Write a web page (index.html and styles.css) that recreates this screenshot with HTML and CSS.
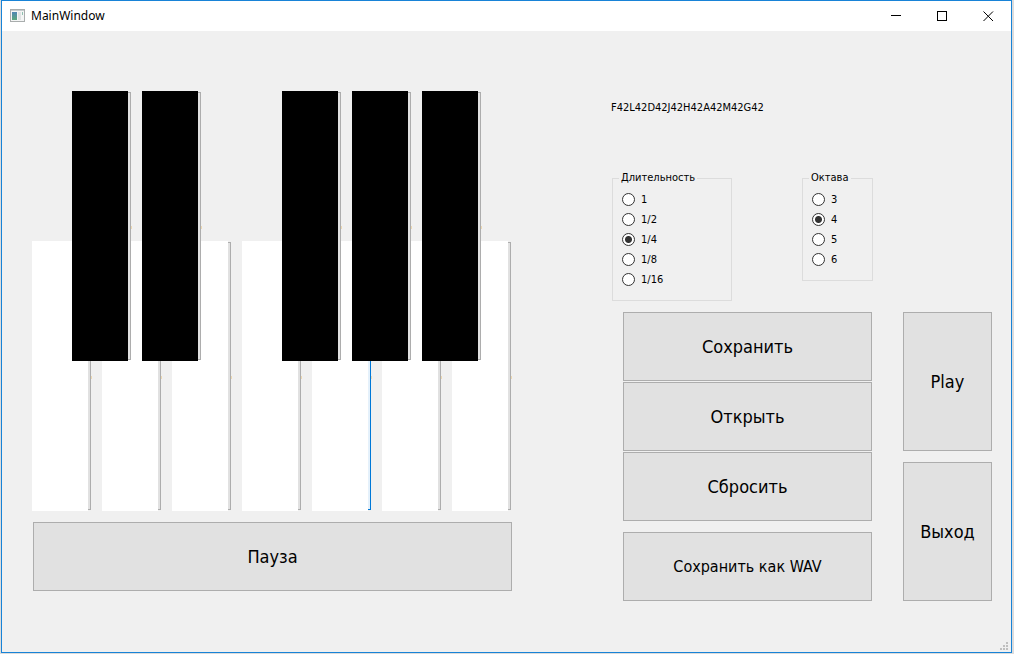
FILE: index.html
```html
<!DOCTYPE html>
<html lang="ru">
<head>
<meta charset="utf-8">
<title>MainWindow</title>
<meta name="viewport" content="width=device-width, initial-scale=1">
<link rel="stylesheet" href="styles.css">
</head>
<body>
<div class="window">
  <header class="titlebar">
    <svg class="app-icon" width="15" height="13" viewBox="0 0 15 13" aria-hidden="true">
      <defs><linearGradient id="pane" x1="0" y1="0" x2="0" y2="1"><stop offset="0" stop-color="#4f86b4"/><stop offset="1" stop-color="#5aa77c"/></linearGradient></defs>
      <rect x=".5" y=".5" width="14" height="12" fill="#f4f5f5" stroke="#a9adad"/>
      <rect x="1" y="1" width="13" height="1" fill="#c5cccd"/>
      <rect x="2" y="3" width="5" height="8" fill="url(#pane)"/>
      <rect x="8" y="3" width="3" height="8" fill="#dfe3e3"/>
      <rect x="12" y="3" width="1" height="3" fill="#8fc0b0"/>
    </svg>
    <h1 class="title">MainWindow</h1>
    <button class="caption" type="button" aria-label="Minimize"><svg width="11" height="11" viewBox="0 0 11 11"><path d="M0 4.5H10"/></svg></button>
    <button class="caption" type="button" aria-label="Maximize"><svg width="11" height="11" viewBox="0 0 11 11"><path d="M.5 .5H9.5V9.5H.5Z"/></svg></button>
    <button class="caption" type="button" aria-label="Close"><svg width="11" height="11" viewBox="0 0 11 11"><path class="smooth" d="M.5 .5L10 10M10 .5L.5 10"/></svg></button>
  </header>
  <main class="content">
    <section class="instrument">
      <div class="piano">
        <div class="keys white">
          <button class="key" type="button" aria-label="C"></button>
          <button class="key" type="button" aria-label="D"></button>
          <button class="key" type="button" aria-label="E"></button>
          <button class="key" type="button" aria-label="F"></button>
          <button class="key current" type="button" aria-label="G"></button>
          <button class="key" type="button" aria-label="A"></button>
          <button class="key" type="button" aria-label="B"></button>
        </div>
        <div class="keys black">
          <button class="key" type="button" aria-label="C sharp"></button>
          <button class="key" type="button" aria-label="D sharp"></button>
          <button class="key after-gap" type="button" aria-label="F sharp"></button>
          <button class="key" type="button" aria-label="G sharp"></button>
          <button class="key" type="button" aria-label="A sharp"></button>
        </div>
      </div>
      <button class="push pause" type="button">Пауза</button>
    </section>
    <section class="panel">
      <p class="melody">F42L42D42J42H42A42M42G42</p>
      <form class="groups">
        <fieldset class="group duration">
          <legend>Длительность</legend>
          <label class="option"><input type="radio" name="duration">1</label>
          <label class="option"><input type="radio" name="duration">1/2</label>
          <label class="option"><input type="radio" name="duration" checked>1/4</label>
          <label class="option"><input type="radio" name="duration">1/8</label>
          <label class="option"><input type="radio" name="duration">1/16</label>
        </fieldset>
        <fieldset class="group octave">
          <legend>Октава</legend>
          <label class="option"><input type="radio" name="octave">3</label>
          <label class="option"><input type="radio" name="octave" checked>4</label>
          <label class="option"><input type="radio" name="octave">5</label>
          <label class="option"><input type="radio" name="octave">6</label>
        </fieldset>
      </form>
      <div class="actions">
        <div class="files">
          <button class="push" type="button">Сохранить</button>
          <button class="push" type="button">Открыть</button>
          <button class="push" type="button">Сбросить</button>
          <button class="push wav" type="button">Сохранить как WAV</button>
        </div>
        <div class="playback">
          <button class="push" type="button">Play</button>
          <button class="push" type="button">Выход</button>
        </div>
      </div>
    </section>
  </main>
  <svg class="grip" width="8" height="8" viewBox="0 0 8 8" aria-hidden="true"><path d="M6 0h2v2H6zM3 3h2v2H3zM6 3h2v2H6zM0 6h2v2H0zM3 6h2v2H3zM6 6h2v2H6z"/></svg>
</div>
</body>
</html>
```
FILE: styles.css
```css
* { box-sizing: border-box; }

body {
  margin: 0;
  padding: 0 2px 1px 1px;
  min-height: 100vh;
  display: flex;
  background: #dcdcdc;
  color: #000;
  font-family: "DejaVu Sans Condensed", "DejaVu Sans", sans-serif;
  font-size: 11px;
}

button { font: inherit; color: inherit; padding: 0; }

.window {
  position: relative;
  flex: 1;
  display: flex;
  flex-direction: column;
  border: 1px solid #1883d7;
  background: #f0f0f0;
}

.titlebar {
  display: flex;
  align-items: center;
  height: 30px;
  padding-left: 8px;
  background: #fff;
}

.app-icon { margin-bottom: 2px; }

.title {
  flex: 1;
  margin: 0 0 0 6px;
  font: 12px/16px "Noto Sans", sans-serif;
  padding-bottom: 1px;
}

.caption {
  display: flex;
  align-items: center;
  justify-content: center;
  width: 46px;
  height: 30px;
  border: 0;
  background: none;
}

.caption path { fill: none; stroke: #000; shape-rendering: crispEdges; }
.caption .smooth { shape-rendering: auto; }

.content {
  display: grid;
  grid-template-columns: 480fr 380fr;
  column-gap: 100px;
  align-items: start;
  padding: 60px 19px 51px 30px;
}

.instrument { display: grid; row-gap: 11px; }

.piano {
  display: grid;
  grid-template-rows: 150px 120px 150px;
  padding-right: 1px;
}

.keys { display: grid; grid-column: 1; column-gap: 11px; }
.white { grid-row: 2 / 4; grid-template-columns: repeat(7, 1fr); }
.black { grid-row: 1 / 3; grid-template-columns: repeat(6, 1fr); margin: 0 30px 0 40px; z-index: 1; pointer-events: none; }

.key {
  position: relative;
  margin: 1px 0;
  border: 1px solid #adadad;
  background: #e1e1e1;
  pointer-events: auto;
}

.key::before {
  content: "";
  position: absolute;
  inset: -2px 2px -2px -1px;
  background: #fff;
}

.key::after {
  content: "";
  position: absolute;
  top: 50%;
  right: -2px;
  width: 1px;
  height: 3px;
  background: #ecd9b4;
}

.black .key::before { background: #000; }
.key.current { border-color: #0078d7; background: #e5f1fb; }
.after-gap { grid-column: 4; }

.push {
  min-height: 69px;
  border: 1px solid #adadad;
  background: #e1e1e1;
  font-size: 18px;
}

.pause { margin-left: 1px; }

.melody { margin: 0 0 46px -1px; line-height: 34px; }

.groups {
  display: flex;
  justify-content: space-between;
  align-items: flex-start;
  padding-right: 119px;
}

.group {
  min-width: 0;
  margin: 0;
  padding: 4px 9px 11px;
  border: 1px solid #dcdcdc;
}

.group legend { margin-left: -3px; padding: 0 2px; line-height: 14px; }
.duration { width: 120px; }
.octave { width: 71px; }

.option { display: flex; align-items: center; gap: 6px; height: 20px; }

.option input {
  appearance: none;
  width: 13px;
  height: 13px;
  margin: 0;
  border: 1px solid #333;
  border-radius: 50%;
  background: #fff;
}

.option input:checked { background: radial-gradient(circle, #333 3px, #fff 4px); }

.actions {
  display: grid;
  grid-template-columns: 249fr 89fr;
  column-gap: 31px;
  margin-top: 11px;
  padding-left: 11px;
}

.files { display: flex; flex-direction: column; gap: 1px; }
.wav { margin-top: 10px; font-size: 16px; }

.playback { display: flex; flex-direction: column; gap: 11px; }
.playback .push { flex: 1; }

.grip { position: absolute; right: 3px; bottom: 2px; fill: #bfbfbf; }
```
